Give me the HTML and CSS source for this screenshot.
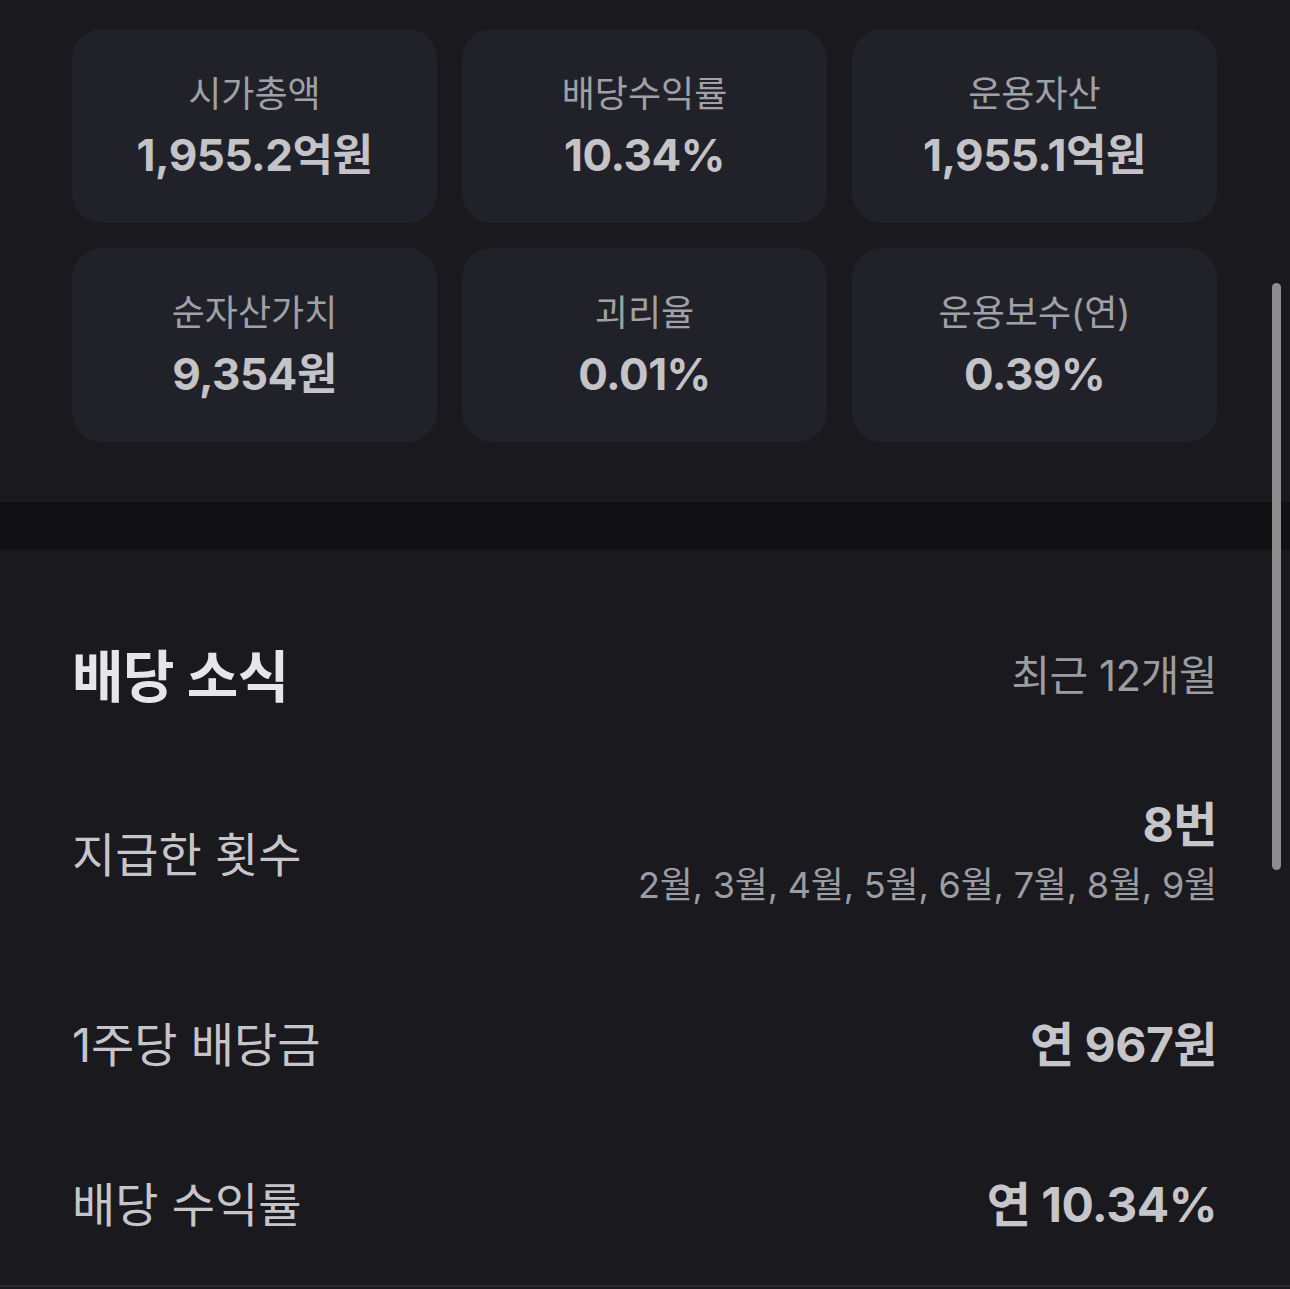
FILE: index.html
```html
<!DOCTYPE html>
<html lang="ko">
<head>
  <meta charset="UTF-8" />
  <meta name="viewport" content="width=device-width, initial-scale=1.0" />
  <title>ETF 정보</title>
  <link rel="stylesheet" href="styles.css">
</head>
<body>
  <section class="stats">
    <div class="stat-grid">
      <div class="stat-card">
        <div class="stat-label">시가총액</div>
        <div class="stat-value">1,955.2억원</div>
      </div>
      <div class="stat-card">
        <div class="stat-label">배당수익률</div>
        <div class="stat-value">10.34%</div>
      </div>
      <div class="stat-card">
        <div class="stat-label">운용자산</div>
        <div class="stat-value">1,955.1억원</div>
      </div>
      <div class="stat-card">
        <div class="stat-label">순자산가치</div>
        <div class="stat-value">9,354원</div>
      </div>
      <div class="stat-card">
        <div class="stat-label">괴리율</div>
        <div class="stat-value">0.01%</div>
      </div>
      <div class="stat-card">
        <div class="stat-label">운용보수(연)</div>
        <div class="stat-value">0.39%</div>
      </div>
    </div>
  </section>

  <div class="divider"></div>

  <section class="dividend">
    <div class="dividend-head">
      <h2>배당 소식</h2>
      <span class="period">최근 12개월</span>
    </div>

    <div class="info-row">
      <div class="info-label">지급한 횟수</div>
      <div class="info-value">
        <div class="strong">8번</div>
        <div class="sub">2월, 3월, 4월, 5월, 6월, 7월, 8월, 9월</div>
      </div>
    </div>

    <div class="info-row">
      <div class="info-label">1주당 배당금</div>
      <div class="info-value">
        <div class="strong">연 967원</div>
      </div>
    </div>

    <div class="info-row">
      <div class="info-label">배당 수익률</div>
      <div class="info-value">
        <div class="strong">연 10.34%</div>
      </div>
    </div>
  </section>

  <div class="scroll-thumb"></div>
</body>
</html>
```

FILE: styles.css
```css
body {
  margin: 0;
  font-family: Inter, "Noto Sans CJK KR", sans-serif;
  background-color: #19191e;
  color: #c3c3c7;
  height: 1289px;
  overflow: hidden;
  position: relative;
}
.stats {
  padding: 29px 73px 60px 72px;
}
.stat-grid {
  display: grid;
  grid-template-columns: repeat(3, 1fr);
  gap: 25px;
}
.stat-card {
  background: #212229;
  border-radius: 30px;
  padding: 40px 0;
  display: flex;
  flex-direction: column;
  align-items: center;
  gap: 12px;
}
.stat-label {
  font-size: 36px;
  line-height: 46px;
  color: #a0a0a6;
  margin-top: 2px;
  margin-bottom: -2px;
}
.stat-value {
  font-size: 44px;
  line-height: 56px;
  font-weight: 700;
  color: #c3c3c8;
  letter-spacing: -0.5px;
}
.divider {
  height: 48px;
  background: #111113;
}
.dividend {
  padding: 82px 73px 0 72px;
  border-bottom: 2px solid #2b2b32;
}
.dividend-head {
  display: flex;
  justify-content: space-between;
  align-items: center;
  height: 80px;
  margin-bottom: 33px;
}
.dividend-head h2 {
  margin: 0;
  font-size: 56px;
  font-weight: 700;
  color: #e6e6ea;
  letter-spacing: -0.5px;
}
.period {
  font-size: 42px;
  color: #9c9ca3;
  letter-spacing: -0.5px;
}
.info-row {
  display: flex;
  justify-content: space-between;
  align-items: center;
  padding: 50px 0;
}
.info-label {
  font-size: 47px;
  line-height: 60px;
  color: #c6c6ca;
}
.info-value {
  text-align: right;
}
.info-value .strong {
  font-size: 48px;
  line-height: 60px;
  font-weight: 700;
  color: #c6c6ca;
  letter-spacing: -0.5px;
}
.info-value .sub {
  font-size: 36px;
  line-height: 60px;
  color: #9c9ca3;
  letter-spacing: -0.2px;
}
.scroll-thumb {
  position: absolute;
  left: 1272px;
  top: 283px;
  width: 9px;
  height: 587px;
  border-radius: 5px;
  background: #8e8e8e;
}
```
